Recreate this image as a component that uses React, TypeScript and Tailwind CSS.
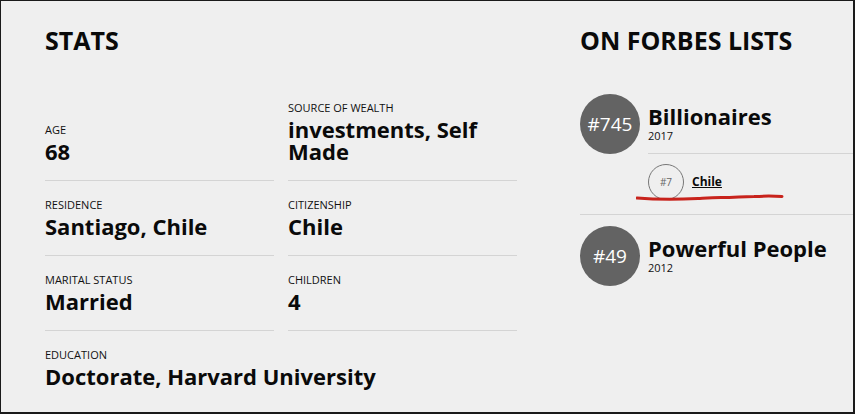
import React from "react";

const font = { fontFamily: '"Open Sans", "Noto Sans", sans-serif' };

function Stat({ label, value, last, span }: { label: string; value: React.ReactNode; last?: boolean; span?: boolean }) {
  return (
    <div className={`${span ? "col-span-2" : ""} ${last ? "" : "border-b border-[#d4d4d4]"} pt-[17px] pb-[18px] flex flex-col`}>
      <div className="text-[11px] leading-[14px] text-[#111] uppercase">{label}</div>
      <div className="mt-[3px] text-[22px] leading-[22px] font-bold text-[#0a0a0a]">{value}</div>
    </div>
  );
}

export default function App() {
  return (
    <div
      className="w-[855px] h-[414px] overflow-hidden bg-[#efefef] border-t border-l border-r-2 border-b-2 border-[#1a1a1a] relative"
      style={font}
    >
      <div className="flex pl-[44px] pt-[24px]">
        {/* Left: stats */}
        <div className="w-[472px] shrink-0">
          <h2 className="text-[25px] leading-[30px] font-bold text-[#0a0a0a]">STATS</h2>
          <div className="mt-[29px] grid grid-cols-2 gap-x-[14px] items-end">
            <Stat label="Age" value="68" />
            <Stat
              label="Source of Wealth"
              value={
                <>
                  investments, Self
                  <br />
                  Made
                </>
              }
            />
            <Stat label="Residence" value="Santiago, Chile" />
            <Stat label="Citizenship" value="Chile" />
            <Stat label="Marital Status" value="Married" />
            <Stat label="Children" value="4" />
            <Stat label="Education" value="Doctorate, Harvard University" last span />
          </div>
        </div>

        {/* Right: forbes lists */}
        <div className="ml-[63px] flex-1 min-w-[300px]">
          <h2 className="text-[25px] leading-[30px] font-bold text-[#0a0a0a] whitespace-nowrap">ON FORBES LISTS</h2>
          <div className="mt-[39px] w-[300px]">
            {/* Billionaires */}
            <div className="border-b border-[#d4d4d4] flex">
              <div className="w-[60px] h-[60px] rounded-full bg-[#636363] text-white text-[19px] flex items-center justify-center shrink-0">
                #745
              </div>
              <div className="ml-[8px] flex-1 flex flex-col">
                <div className="h-[60px] border-b border-[#d4d4d4] flex flex-col justify-center">
                  <div className="text-[22px] leading-[22px] font-bold text-[#0a0a0a]">Billionaires</div>
                  <div className="mt-[2px] text-[11px] leading-[14px] text-[#111]">2017</div>
                </div>
                <div className="flex items-center pt-[10px] pb-[14px] relative">
                  <div className="w-[36px] h-[36px] rounded-full border border-[#777] text-[10px] text-[#666] flex items-center justify-center">
                    #7
                  </div>
                  <span className="ml-[8px] text-[12px] font-bold underline text-[#0a0a0a]">Chile</span>
                  <svg
                    className="absolute left-[-12px] top-[39px]"
                    width="150"
                    height="10"
                    viewBox="0 0 150 10"
                  >
                    <path
                      d="M1 5 C 20 6.5, 40 6.5, 62 5.5 C 70 5, 75 4.5, 85 4.5 C 100 4.5, 105 3.5, 118 3.5 C 128 3, 138 3, 146 3.5"
                      stroke="#c8231c"
                      strokeWidth="3"
                      fill="none"
                      strokeLinecap="round"
                    />
                  </svg>
                </div>
              </div>
            </div>

            {/* Powerful People */}
            <div className="mt-[11px] flex">
              <div className="w-[60px] h-[60px] rounded-full bg-[#636363] text-white text-[19px] flex items-center justify-center shrink-0">
                #49
              </div>
              <div className="ml-[8px] h-[60px] flex flex-col justify-center">
                <div className="text-[22px] leading-[22px] font-bold text-[#0a0a0a] whitespace-nowrap">Powerful People</div>
                <div className="mt-[2px] text-[11px] leading-[14px] text-[#111]">2012</div>
              </div>
            </div>
          </div>
        </div>
      </div>
    </div>
  );
}
